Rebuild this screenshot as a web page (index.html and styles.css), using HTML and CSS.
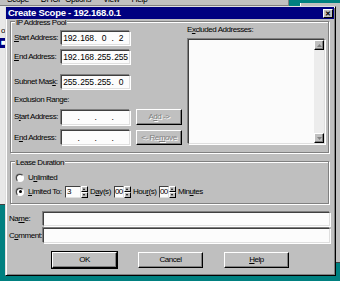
FILE: index.html
```html
<!DOCTYPE html>
<html>
<head>
<meta charset="utf-8">
<link rel="stylesheet" href="styles.css">
</head>
<body>
<div class="desktop">
  <div class="bgwin bgwin-main">
    <div class="menubar"><span>Scope</span><span>DHCP Options</span><span>View</span><span>Help</span></div>
    <div class="bgwin-content">
      <div class="bg-item">o</div>
      <div class="bg-item sel">■</div>
    </div>
  </div>
  <div class="bgwin bgwin-right"></div>

  <div class="dialog">
    <div class="titlebar">
      <span class="title">Create Scope - 192.168.0.1</span>
      <span class="close">&#x2715;</span>
    </div>
    <div class="client">
      <div class="group pool">
        <span class="legend">IP Address Pool</span>
        <div class="pool-left">
          <div class="row r1">
            <span class="lbl"><u>S</u>tart Address:</span>
            <div class="ip"><span>192</span><i>.</i><span>168</span><i>.</i><span>0</span><i>.</i><span>2</span></div>
          </div>
          <div class="row r2">
            <span class="lbl"><u>E</u>nd Address:</span>
            <div class="ip"><span>192</span><i>.</i><span>168</span><i>.</i><span>255</span><i>.</i><span>255</span></div>
          </div>
          <div class="row r3">
            <span class="lbl">Subnet Mas<u>k</u>:</span>
            <div class="ip"><span>255</span><i>.</i><span>255</span><i>.</i><span>255</span><i>.</i><span>0</span></div>
          </div>
          <div class="sublabel">Exclusion Range:</div>
          <div class="row r4">
            <span class="lbl">S<u>t</u>art Address:</span>
            <div class="ip"><span></span><i>.</i><span></span><i>.</i><span></span><i>.</i><span></span></div>
            <span class="btn disabled side">A<u>d</u>d -&gt;</span>
          </div>
          <div class="row r5">
            <span class="lbl">E<u>n</u>d Address:</span>
            <div class="ip"><span></span><i>.</i><span></span><i>.</i><span></span><i>.</i><span></span></div>
            <span class="btn disabled side">&lt;- Re<u>m</u>ove</span>
          </div>
        </div>
        <div class="pool-right">
          <div class="ex-label">E<u>x</u>cluded Addresses:</div>
          <div class="listbox">
            <div class="list-area"></div>
            <div class="vscroll">
              <span class="sbtn"><svg width="5" height="3" viewBox="0 0 5 3"><path d="M0 3h5L2.5 0z" fill="#808080"/></svg></span>
              <span class="track"></span>
              <span class="sbtn"><svg width="5" height="3" viewBox="0 0 5 3"><path d="M0 0h5L2.5 3z" fill="#808080"/></svg></span>
            </div>
          </div>
        </div>
      </div>

      <div class="group lease">
        <span class="legend">Lease Duration</span>
        <div class="lrow lr1">
          <span class="radio"></span>
          <span class="rtext">U<u>n</u>limited</span>
        </div>
        <div class="lrow lr2">
          <span class="radio on"></span>
          <span class="rtext limited"><u>L</u>imited To:</span>
          <span class="num w16">3</span><span class="spin"><b></b><b></b></span>
          <span class="unit u1">D<u>a</u>y(s)</span>
          <span class="num w10">00</span><span class="spin"><b></b><b></b></span>
          <span class="unit u2">Hou<u>r</u>(s)</span>
          <span class="num w10">00</span><span class="spin"><b></b><b></b></span>
          <span class="unit">Min<u>u</u>tes</span>
        </div>
      </div>

      <div class="frow fr1">
        <span class="flbl">Na<u>m</u>e:</span>
        <span class="field"></span>
      </div>
      <div class="frow fr2">
        <span class="flbl">C<u>o</u>mment:</span>
        <span class="field"></span>
      </div>

      <div class="buttons">
        <span class="btn big default">OK</span>
        <span class="btn big">Cancel</span>
        <span class="btn big"><u>H</u>elp</span>
      </div>
    </div>
  </div>
</div>
</body>
</html>
```

FILE: styles.css
```css
* { box-sizing: border-box; }
html, body { margin: 0; padding: 0; }
body {
  width: 340px;
  height: 281px;
  overflow: hidden;
  background: #008080;
  font-family: "Liberation Sans", Arial, sans-serif;
  font-size: 8px;
  letter-spacing: -0.45px;
  color: #000;
}
u { text-decoration: underline; text-underline-offset: 1px; }
.desktop { position: relative; width: 340px; height: 281px; overflow: hidden; }

/* background windows */
.bgwin { position: absolute; background: #c0c0c0; }
.bgwin-main {
  left: -4px; top: -14px; width: 293px; height: 219px;
  border-right: 1px solid #808080;
  border-bottom: 1px solid #404040;
}
.menubar {
  height: 19px;
  display: flex;
  gap: 12px;
  padding: 8px 0 0 11px;
  font-size: 8.5px;
  line-height: 10px;
}
.bgwin-content {
  margin: 0 0 0 4px;
  height: 199px;
  background: #e8e8e8;
  border-top: 1px solid #808080;
  padding-top: 20px;
}
.bg-item { font-size: 8px; line-height: 10px; padding-left: 1px; }
.bg-item.sel { background: #000080; color: #fff; width: 10px; margin-top: 2px; }
.bgwin-right {
  left: 300px; top: 3px; width: 60px; height: 260px;
  border-left: 1px solid #fff;
  border-bottom: 1px solid #404040;
}

/* dialog */
.dialog {
  position: absolute;
  left: 5px; top: 6px;
  width: 331px; height: 270px;
  background: #bfbfbf;
  border: 1px solid;
  border-color: #dfdfdf #000 #000 #dfdfdf;
  box-shadow: inset 1px 1px 0 #fff, inset -1px -1px 0 #808080;
}
.titlebar {
  height: 12px;
  margin-right: 1px;
  background: #000080;
  color: #fff;
  display: flex;
  align-items: center;
  justify-content: space-between;
  padding: 0 1px 0 2px;
}
.title { font-weight: bold; font-size: 9.5px; letter-spacing: -0.25px; line-height: 12px; }
.close {
  width: 10px; height: 9px;
  background: #c0c0c0;
  color: #000;
  font-size: 7px;
  line-height: 9px;
  text-align: center;
  font-weight: bold;
  letter-spacing: 0;
  border: 1px solid;
  border-color: #fff #000 #000 #fff;
  display: flex; align-items: center; justify-content: center;
}

.client { padding: 2px 0 0 4px; }

.group {
  position: relative;
  border: 1px solid #808080;
  box-shadow: inset 1px 1px 0 #fff, 1px 1px 0 #fff;
  width: 319px;
}
.legend {
  position: absolute;
  left: 4px; top: -2px;
  padding: 0 1px;
  background: #bfbfbf;
  line-height: 6px;
  height: 6px;
}

.pool { height: 132px; display: flex; }
.pool-left { width: 176px; padding-left: 3px; }
.row { display: flex; align-items: center; height: 14px; }
.r1 { margin-top: 9px; }
.r2 { margin-top: 4px; height: 15px; }
.r3 { margin-top: 11px; }
.r4 { margin-top: 4px; height: 16px; }
.r5 { margin-top: 5px; height: 15px; }
.lbl { width: 47px; line-height: 10px; white-space: nowrap; }
.sublabel { margin-top: 6px; height: 10px; line-height: 10px; }

.ip {
  width: 69px; height: 14px;
  background: #fcfcfc;
  border: 1px solid;
  border-color: #404040 #dfdfdf #dfdfdf #404040;
  box-shadow: -1px -1px 0 #808080, 1px 1px 0 #fff;
  display: flex;
  align-items: center;
  padding: 0 1px;
  font-size: 8.5px;
  letter-spacing: -0.3px;
}
.r4 .ip, .r5 .ip { height: 15px; }
.ip span { flex: 1; text-align: center; line-height: 10px; }
.ip i { font-style: normal; width: 3px; text-align: center; line-height: 10px; }

.btn {
  display: flex; align-items: center; justify-content: center;
  background: #c0c0c0;
  border: 1px solid;
  border-color: #fff #000 #000 #fff;
  box-shadow: inset -1px -1px 0 #808080;
  line-height: 10px;
}
.btn.side { width: 46px; height: 16px; margin-left: 6px; }
.r5 .btn.side { height: 15px; }
.btn.disabled { color: #808080; text-shadow: 1px 1px 0 #fff; }

.pool-right { flex: 1; padding-left: 0; }
.ex-label { margin-top: 3px; height: 10px; line-height: 10px; }
.listbox {
  margin-top: 4px;
  margin-left: 1px;
  width: 137px; height: 105px;
  border: 1px solid;
  border-color: #404040 #dfdfdf #dfdfdf #404040;
  box-shadow: -1px -1px 0 #808080, 1px 1px 0 #fff;
  display: flex;
}
.list-area { flex: 1; background: #fbfbfb; }
.vscroll { width: 10px; display: flex; flex-direction: column; background: #ececec; }
.track { flex: 1; }
.sbtn {
  width: 10px; height: 10px;
  background: #c0c0c0;
  border: 1px solid;
  border-color: #fff #000 #000 #fff;
  box-shadow: inset -1px -1px 0 #808080;
  display: flex; align-items: center; justify-content: center;
}

/* lease */
.lease { margin-top: 8px; height: 43px; padding-left: 5px; }
.lrow { display: flex; align-items: center; }
.lr1 { margin-top: 10px; height: 12px; }
.lr2 { margin-top: 1px; height: 13px; }
.radio {
  width: 8px; height: 8px;
  border-radius: 50%;
  background: #fff;
  border: 1px solid;
  border-color: #404040 #fff #fff #404040;
  box-shadow: -0.5px -0.5px 0 #808080;
  position: relative;
}
.radio.on::after {
  content: "";
  position: absolute;
  left: 1.5px; top: 1.5px;
  width: 3px; height: 3px;
  border-radius: 50%;
  background: #000;
}
.rtext { margin-left: 4px; line-height: 10px; }
.rtext.limited { width: 37px; }
.num {
  height: 12px;
  background: #fcfcfc;
  border: 1px solid;
  border-color: #404040 #dfdfdf #dfdfdf #404040;
  line-height: 10px;
  padding-left: 1px;
  font-size: 8px;
}
.w16 { width: 16px; }
.w10 { width: 10px; padding-left: 0; letter-spacing: -0.8px; }
.spin { width: 7px; height: 12px; display: flex; flex-direction: column; gap: 0; }
.spin b {
  flex: 1;
  background: #c0c0c0;
  border: 1px solid;
  border-color: #fff #000 #000 #fff;
  position: relative;
}
.spin b::after {
  content: "";
  position: absolute;
  left: 1px; top: 1px;
  border-left: 1.5px solid transparent;
  border-right: 1.5px solid transparent;
}
.spin b:first-child::after { border-bottom: 2px solid #000; }
.spin b:last-child::after { border-top: 2px solid #000; }
.unit { margin-left: 2px; line-height: 10px; }
.u1 { width: 24px; }
.u2 { width: 26px; }

/* name/comment */
.frow { display: flex; align-items: center; margin-left: -1px; }
.fr1 { margin-top: 8px; height: 14px; }
.fr2 { margin-top: 2px; height: 15px; }
.flbl { width: 34px; line-height: 10px; }
.field {
  width: 287px; height: 100%;
  background: #fcfcfc;
  border: 1px solid;
  border-color: #404040 #dfdfdf #dfdfdf #404040;
  box-shadow: -1px -1px 0 #808080, 1px 1px 0 #fff;
}

.buttons {
  margin-top: 9px;
  display: flex;
  justify-content: center;
  gap: 21px;
  margin-left: -4px;
}
.btn.big { width: 65px; height: 16px; }
.btn.default { outline: 1px solid #000; outline-offset: 0; border-color: #fff #000 #000 #fff; }
```
